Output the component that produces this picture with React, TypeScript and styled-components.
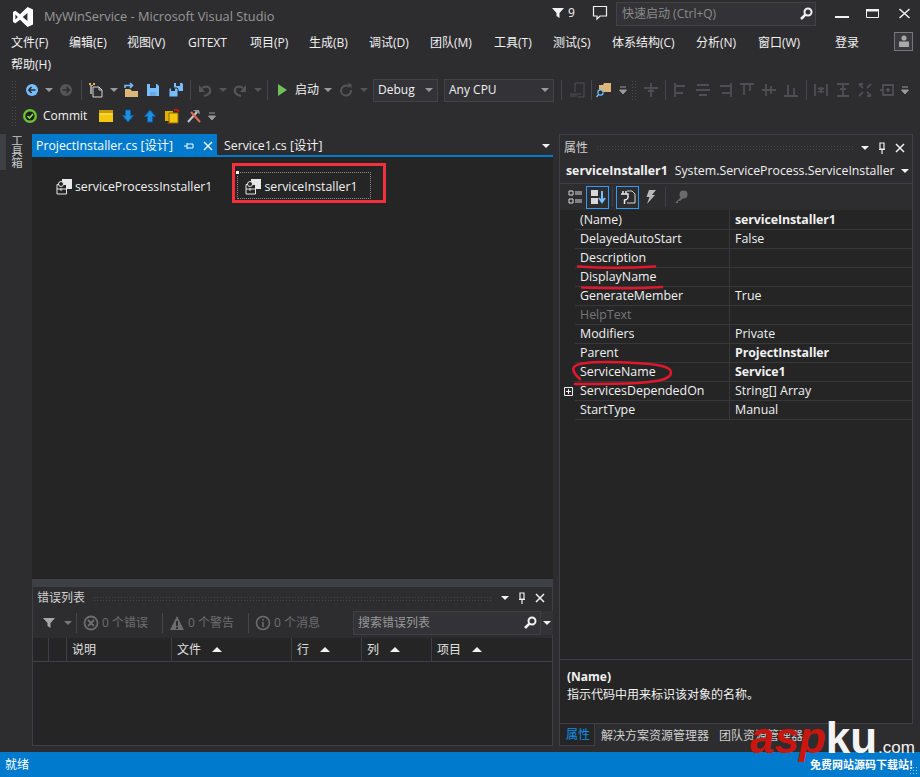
import React from 'react'
import styled, { createGlobalStyle } from 'styled-components'

const GlobalStyle = createGlobalStyle`
  html, body {
    margin: 0;
    padding: 0;
    background: #2d2d30;
  }
  * {
    box-sizing: border-box;
  }
`

const Root = styled.div`
  position: relative;
  width: 920px;
  height: 777px;
  overflow: hidden;
  display: flex;
  flex-direction: column;
  background: #2d2d30;
  color: #f1f1f1;
  font-family: 'Open Sans', 'Noto Sans CJK SC', sans-serif;
  font-size: 12px;
  line-height: 16px;
`

const TitleBar = styled.div`
  height: 30px;
  flex: none;
  display: flex;
  align-items: center;
  padding: 3px 0 0 12px;
`

const AppTitle = styled.div`
  margin: -2px 0 0 10px;
  width: 508px;
  flex: none;
  color: #999;
  font-size: 12.8px;
`

const Notify = styled.div`
  display: flex;
  align-items: center;
  gap: 4px;
  width: 40px;
  flex: none;
  margin-top: -7px;
`

const Bubble = styled.div`
  flex: none;
  margin-top: -7px;
`

const QuickLaunch = styled.div`
  margin: -5px 0 0 8px;
  width: 200px;
  height: 24px;
  flex: none;
  padding: 0 2px 0 5px;
  display: flex;
  align-items: center;
  justify-content: space-between;
  background: #333337;
  border: 1px solid #434346;
  color: #8a8a8a;
`

const WindowButtons = styled.div`
  margin: -7px 0 0 19px;
  display: flex;
  gap: 17px;
`

const MenuRow = styled.div`
  height: 22px;
  flex: none;
  display: flex;
  align-items: center;
  padding: 3px 0 0 11px;
`

const MenuItem = styled.span<{ $w?: number }>`
  width: ${(p) => (p.$w ? `${p.$w}px` : 'auto')};
  flex: none;
  white-space: nowrap;
`

const Avatar = styled.div`
  width: 19px;
  height: 19px;
  margin: -3px 0 0 35px;
  border: 1px solid #77777b;
  background: #3a3a3e;
  display: flex;
  align-items: center;
  justify-content: center;
`

const Toolbar = styled.div<{ $top: number }>`
  height: 24px;
  flex: none;
  margin-top: ${(p) => p.$top}px;
  display: flex;
  align-items: center;
  padding-left: 11px;
`

const Grip = styled.span`
  width: 6px;
  height: 20px;
  flex: none;
  background-image: radial-gradient(#4c4c50 0.7px, transparent 0.8px);
  background-size: 3px 3px;
`

const Tool = styled.span<{ $w: number }>`
  width: ${(p) => p.$w}px;
  height: 22px;
  flex: none;
  display: flex;
  align-items: center;
  justify-content: center;
`

const ToolSep = styled.span`
  width: 1px;
  height: 20px;
  flex: none;
  background: #47474b;
`

const ToolText = styled.span`
  flex: none;
  white-space: nowrap;
`

const Combo = styled.div<{ $w: number; $left: number }>`
  width: ${(p) => p.$w}px;
  margin-left: ${(p) => p.$left}px;
  height: 23px;
  flex: none;
  padding: 0 4px;
  display: flex;
  align-items: center;
  justify-content: space-between;
  background: #333337;
  border: 1px solid #434346;
`

const Arrow = styled.i<{ $color?: string }>`
  width: 0;
  height: 0;
  flex: none;
  border-left: 4px solid transparent;
  border-right: 4px solid transparent;
  border-top: 4px solid ${(p) => p.$color ?? '#999'};
`

const UpArrow = styled.i`
  width: 0;
  height: 0;
  flex: none;
  margin-left: 11px;
  border-left: 5px solid transparent;
  border-right: 5px solid transparent;
  border-bottom: 5px solid #f1f1f1;
`

const Workspace = styled.div`
  margin-top: 6px;
  height: 612px;
  flex: none;
  display: flex;
`

const SideStrip = styled.div`
  width: 32px;
  flex: none;
  display: flex;
`

const SideMark = styled.div`
  width: 6px;
  height: 36px;
  background: #3f3f46;
`

const SideText = styled.div`
  writing-mode: vertical-lr;
  margin: 1px 0 0 3px;
  height: 36px;
  width: 16px;
  font-size: 11.5px;
  line-height: 14px;
  color: #c7c7c7;
  letter-spacing: -0.5px;
`

const DocColumn = styled.div`
  width: 521px;
  flex: none;
  display: flex;
  flex-direction: column;
`

const TabStrip = styled.div`
  height: 23px;
  flex: none;
  display: flex;
  align-items: flex-start;
  border-bottom: 2px solid #007acc;
`

const ActiveTab = styled.div`
  width: 185px;
  height: 21px;
  flex: none;
  padding: 2px 4px 0;
  display: flex;
  align-items: center;
  background: #007acc;
  color: #fff;
`

const TabLabel = styled.span`
  flex: 1;
  white-space: nowrap;
  font-size: 12.3px;
`

const TabButtons = styled.span`
  display: flex;
  align-items: center;
  gap: 9px;
`

const Tab = styled.div`
  flex: 1;
  height: 21px;
  padding: 2px 3px 0 7px;
  display: flex;
  align-items: center;
  justify-content: space-between;
`

const Surface = styled.div`
  height: 422px;
  flex: none;
  padding: 15px 0 0 24px;
  display: flex;
  align-items: flex-start;
  background: #252526;
`

const Component = styled.div`
  display: flex;
  align-items: center;
  gap: 2px;
  height: 27px;
  font-size: 12.3px;
  white-space: nowrap;
  padding-top: 2px;
`

const Selected = styled(Component)`
  position: relative;
  margin-left: 25px;
  padding: 2px 0 0 7px;
  width: 134px;
  border: 1px dotted #8d8d8d;
`

const Handle = styled.i`
  position: absolute;
  left: -3px;
  top: -3px;
  width: 5px;
  height: 5px;
  background: #fff;
  border: 1px solid #222;
`

const Splitter = styled.div`
  height: 8px;
  flex: none;
  background: #3f3f46;
`

const ErrorPanel = styled.div`
  flex: 1;
  display: flex;
  flex-direction: column;
  background: #252526;
  border: 1px solid #3f3f46;
  border-top: 0;
`

const PanelTitle = styled.div<{ $h: number }>`
  height: ${(p) => p.$h}px;
  flex: none;
  padding: 1px 7px 0 4px;
  display: flex;
  align-items: center;
  gap: 8px;
  background: #2d2d30;
  color: #d0d0d0;
`

const TitleDots = styled.span`
  flex: 1;
  height: 5px;
  background-image: radial-gradient(#46464a 0.6px, transparent 0.7px);
  background-size: 3px 3px;
`

const PanelButtons = styled.span`
  display: flex;
  align-items: center;
  gap: 8px;
`

const ErrorBar = styled.div`
  height: 30px;
  flex: none;
  display: flex;
  align-items: center;
  padding-left: 6px;
  background: #2d2d30;
`

const Counter = styled.span`
  width: 85px;
  flex: none;
  padding-left: 6px;
  display: flex;
  align-items: center;
  gap: 3px;
  color: #6d6d70;
  white-space: nowrap;
`

const SearchBox = styled.div`
  margin-left: 19px;
  width: 188px;
  height: 24px;
  flex: none;
  padding: 0 3px 0 4px;
  display: flex;
  align-items: center;
  justify-content: space-between;
  background: #333337;
  border: 1px solid #3f3f46;
  color: #999;
`

const SearchDrop = styled.span`
  width: 12px;
  height: 24px;
  flex: none;
  display: flex;
  align-items: center;
  justify-content: center;
  background: #333337;
`

const ColumnHead = styled.div`
  height: 24px;
  flex: none;
  display: flex;
  border-bottom: 1px solid #3f3f46;
`

const HeadCell = styled.div<{ $w: number }>`
  width: ${(p) => p.$w}px;
  flex: none;
  padding-left: 5px;
  display: flex;
  align-items: center;
  color: #e0e0e0;
  border-right: 1px solid #3f3f46;
  &:last-child {
    border-right: 0;
  }
`

const PropsPanel = styled.div`
  margin-left: 6px;
  width: 354px;
  flex: none;
  display: flex;
  flex-direction: column;
`

const PropsBody = styled.div`
  flex: 1;
  display: flex;
  flex-direction: column;
  border: 1px solid #3f3f46;
  background: #252526;
`

const ObjectRow = styled.div`
  height: 25px;
  flex: none;
  padding: 0 3px 0 6px;
  display: flex;
  align-items: center;
  justify-content: space-between;
  background: #2d2d30;
  border-bottom: 1px solid #3f3f46;
  white-space: nowrap;
  font-size: 12.3px;
`

const ObjectName = styled.b`
  font-weight: 700;
  margin-right: 7px;
`

const PropsBar = styled.div`
  height: 26px;
  flex: none;
  padding-left: 3px;
  display: flex;
  align-items: center;
  background: #2d2d30;
`

const BarButton = styled.span<{ $on?: boolean }>`
  width: 23px;
  height: 23px;
  flex: none;
  display: flex;
  align-items: center;
  justify-content: center;
  border: 1px solid ${(p) => (p.$on ? '#3399ff' : 'transparent')};
`

const BarSep = styled.span`
  width: 1px;
  height: 20px;
  margin: 0 3px;
  flex: none;
  background: #3f3f46;
`

const PropGrid = styled.div`
  flex: 1;
`

const PropRow = styled.div`
  height: 19px;
  display: grid;
  grid-template-columns: 15px 155px 1fr;
  font-size: 12.4px;
  line-height: 19px;
`

const Gutter = styled.div`
  display: flex;
  align-items: center;
  justify-content: center;
  padding-left: 1px;
`

const PropName = styled.div<{ $dim?: boolean }>`
  padding-left: 5px;
  color: ${(p) => (p.$dim ? '#777' : '#f1f1f1')};
  white-space: nowrap;
  border-bottom: 1px solid #38383c;
  border-right: 1px solid #38383c;
`

const PropValue = styled.div<{ $bold?: boolean }>`
  padding-left: 5px;
  font-weight: ${(p) => (p.$bold ? 700 : 400)};
  letter-spacing: ${(p) => (p.$bold ? '-0.1px' : '0')};
  border-bottom: 1px solid #38383c;
`

const Description = styled.div`
  height: 64px;
  flex: none;
  padding: 8px 7px 0;
  border-top: 1px solid #3f3f46;
  line-height: 18px;
  white-space: nowrap;
`

const DescTitle = styled.div`
  font-weight: 700;
`

const BottomTabs = styled.div`
  height: 22px;
  flex: none;
  display: flex;
`

const BottomTab = styled.div<{ $on?: boolean }>`
  height: 22px;
  flex: none;
  padding: 1px 4px 0 6px;
  display: flex;
  align-items: center;
  color: ${(p) => (p.$on ? '#0e8fe8' : '#d0d0d0')};
  background: ${(p) => (p.$on ? '#252526' : 'transparent')};
  border: ${(p) => (p.$on ? '1px solid #3f3f46' : '0')};
  border-top: 0;
`

const StatusBar = styled.div`
  margin-top: 6px;
  height: 25px;
  flex: none;
  padding: 0 2px 0 5px;
  display: flex;
  align-items: center;
  justify-content: space-between;
  background: #007acc;
  color: #fff;
`

const ResizeGrip = styled.span`
  width: 9px;
  height: 9px;
  margin-top: 12px;
  background-image: radial-gradient(#9fd0ef 0.7px, transparent 0.8px);
  background-size: 3px 3px;
`

const Annotations = styled.svg`
  position: absolute;
  inset: 0;
  pointer-events: none;
`

const Watermark = styled.div`
  position: absolute;
  left: 750px;
  top: 713px;
  width: 170px;
  height: 64px;
  font-family: 'Liberation Sans', Arial, sans-serif;
`

const MarkWord = styled.div`
  position: absolute;
  left: 0;
  top: 0;
  font-size: 44px;
  line-height: 50px;
  font-weight: 700;
  font-style: italic;
  white-space: nowrap;
  color: #c9170f;
`

const MarkWhite = styled.span`
  color: #f4f4f4;
  font-style: normal;
`

const MarkCom = styled.span`
  position: absolute;
  left: 128px;
  top: 24px;
  font-size: 17px;
  line-height: 22px;
  color: #f4f4f4;
`

const MarkSlogan = styled.div`
  position: absolute;
  left: 60px;
  top: 44px;
  font-family: 'Noto Sans CJK SC', sans-serif;
  font-size: 11px;
  line-height: 14px;
  font-weight: 700;
  color: #fff;
  white-space: nowrap;
`

const Icon = ({ w = 16, h = 16, children }: { w?: number; h?: number; children: React.ReactNode }) => (
  <svg width={w} height={h} viewBox={`0 0 ${w} ${h}`} style={{ display: 'block', flex: 'none' }}>
    {children}
  </svg>
)

const VsLogo = () => (
  <Icon w={22} h={22}>
    <path d="M15.6 1 L21 3.4 V18.6 L15.6 21 L8 13.8 L3.4 17.2 L1 16 V6 L3.4 4.8 L8 8.2 Z M15.4 7 L10.8 11 L15.4 15 Z M3.4 8.6 V13.4 L5.8 11 Z" fill="#fff" fillRule="evenodd" />
  </Icon>
)

const Search = () => (
  <Icon w={14} h={14}>
    <circle cx="9" cy="5" r="3.5" fill="none" stroke="#f1f1f1" strokeWidth="2" />
    <path d="M6.4 7.6 L2 12" stroke="#f1f1f1" strokeWidth="2.6" />
  </Icon>
)

const Pin = ({ color = '#f1f1f1' }: { color?: string }) => (
  <Icon w={10} h={12}>
    <path d="M3 1 H7 V7 H3 Z M2 7.5 H8 M5 8 V12" fill="none" stroke={color} strokeWidth="1.2" />
  </Icon>
)

const Close = () => (
  <Icon w={10} h={10}>
    <path d="M1 1 L9 9 M9 1 L1 9" stroke="#f1f1f1" strokeWidth="1.5" />
  </Icon>
)

const Circle = ({ fill, glyph }: { fill: string; glyph: string }) => (
  <Icon>
    <circle cx="8" cy="8" r="6" fill={fill} />
    <path d="M11.5 8 H5 M7.5 5 L4.8 8 L7.5 11" fill="none" stroke={glyph} strokeWidth="1.6" transform={fill === '#555' ? 'rotate(180 8 8)' : undefined} />
  </Icon>
)

const NewProject = () => (
  <Icon>
    <path d="M5 5 H11 L14 8 V15 H5 Z M11 5 V8 H14" fill="none" stroke="#d8d8d8" />
    <path d="M2 3 H4 V12 H2 Z" fill="#999" />
    <path d="M1 1 h2 v2 h-2 Z M5 1 h2 v2 h-2 Z M3 3 h2 v1 h-2 Z" fill="#e8b060" />
  </Icon>
)

const OpenFile = () => (
  <Icon>
    <path d="M2 7 H7 L9 9 H15 V15 H2 Z" fill="#dcb67a" />
    <path d="M2 6 V3.5 H9 M7 1 L9.5 3.5 L7 6" fill="none" stroke="#75beff" strokeWidth="1.6" />
  </Icon>
)

const Save = () => (
  <Icon>
    <path d="M2 2 H12 L14 4 V14 H2 Z" fill="#75beff" />
    <path d="M5 2 H11 V6 H5 Z" fill="#2d2d30" />
    <path d="M5 10 H11 V14 H5 Z" fill="#2d2d30" opacity="0.15" />
  </Icon>
)

const SaveAll = () => (
  <Icon>
    <path d="M6 1 H14 L15 2 V9 H6 Z" fill="#75beff" />
    <path d="M8 1 H12 V4 H8 Z" fill="#2d2d30" />
    <path d="M1 6 H9 L10 7 V15 H1 Z" fill="#75beff" stroke="#2d2d30" />
    <path d="M3 6 H7 V9 H3 Z" fill="#2d2d30" />
  </Icon>
)

const Undo = ({ flip }: { flip?: boolean }) => (
  <Icon>
    <g transform={flip ? 'matrix(-1 0 0 1 16 0)' : undefined}>
      <path d="M7 14 C12 13 14 10 13 7 C12 4 8 4 5 6" fill="none" stroke="#555" strokeWidth="2.2" />
      <path d="M2 3 V10 H8 Z" fill="#555" />
    </g>
  </Icon>
)

const Play = () => (
  <Icon w={12} h={14}>
    <path d="M2 1 L11 7 L2 13 Z" fill="#6fbf5a" />
  </Icon>
)

const Refresh = () => (
  <Icon>
    <path d="M11.5 5 A5 5 0 1 0 13 8" fill="none" stroke="#555" strokeWidth="2" />
    <path d="M9 1 L13.5 2 V6.5 Z" fill="#555" />
  </Icon>
)

const Attach = () => (
  <Icon>
    <path d="M6 1 H15 V15 H9 M6 1 V10" fill="none" stroke="#505054" />
    <path d="M1 12 H12 M1 14 H8" stroke="#505054" />
  </Icon>
)

const FindFolder = () => (
  <Icon w={16} h={16}>
    <path d="M3 3 H7 L8 1 H15 V10 H3 Z" fill="#dcb67a" />
    <circle cx="4.5" cy="10.5" r="2.6" fill="#2d2d30" stroke="#75beff" strokeWidth="1.2" />
    <path d="M2.6 12.5 L0.5 15" stroke="#75beff" strokeWidth="1.4" />
  </Icon>
)

const Layout = ({ d }: { d: string }) => (
  <Icon>
    <path d={d} fill="none" stroke="#4f4f53" strokeWidth="1.8" />
  </Icon>
)

const centerIcon = 'M1 6 H15 M8 1 V15 M5 9 H11'

const alignIcons = [
  'M2 1 V15 M3 4 H12 M3 11 H10',
  'M2 3 H14 M1 8 H15 M4 13 H12',
  'M14 1 V15 M3 4 H13 M5 11 H13',
  'M1 2 H15 M5 3 V13 M11 3 V9',
  'M1 8 H15 M5 2 V14 M10 4 V12',
  'M1 14 H15 M5 3 V13 M11 6 V13',
]

const spacingIcons = [
  'M2 2 V14 M14 2 V14 M8 5 V11 M5 6 L11 10 M11 6 L5 10',
  'M2 2 H14 M2 14 H14 M8 3 V13 M5 7 H11',
  'M2 2 L6 6 M14 2 L10 6 M2 14 L6 10 M14 14 L10 10 M2 2 H6 M10 14 H14',
  'M4 3 H14 V13 H4 Z M9 6 V10 M7 8 H11 M1 8 H4',
]

const ComponentGlyph = () => (
  <Icon w={17} h={17}>
    <path d="M6 1 H16 V11 H6 Z" fill="#e8e8e8" />
    <path d="M1 6.5 H10.5 V16 H1 Z" fill="#252526" stroke="#e8e8e8" />
    <circle cx="5" cy="6" r="2.5" fill="#252526" stroke="#e8e8e8" />
    <path d="M1 11 H10 M5 10 V13" stroke="#e8e8e8" />
  </Icon>
)

const Funnel = ({ color }: { color: string }) => (
  <Icon w={12} h={12}>
    <path d="M0 1 H12 L7.5 6 V11 L4.5 9 V6 Z" fill={color} />
  </Icon>
)

const ToolMoreArrow = () => (
  <Icon w={8} h={10}>
    <path d="M1 2 H7 M0.5 5 H7.5 L4 9 Z" stroke="#999" fill="#999" />
  </Icon>
)

const Counters = [
  { id: 'err', label: '0 个错误', icon: <path d="M8 1.5 A6.5 6.5 0 1 0 8 14.5 A6.5 6.5 0 1 0 8 1.5 M5 5 L11 11 M11 5 L5 11" fill="none" stroke="#6d6d70" strokeWidth="1.8" /> },
  { id: 'warn', label: '0 个警告', icon: <path d="M8 1 L15 15 H1 Z M7 6 V11 H9 V6 Z M7 12 V14 H9 V12 Z" fill="#6d6d70" fillRule="evenodd" /> },
  { id: 'info', label: '0 个消息', icon: <path d="M8 1.5 A6.5 6.5 0 1 0 8 14.5 A6.5 6.5 0 1 0 8 1.5 M8 4 V5.8 M8 7 V12" fill="none" stroke="#6d6d70" strokeWidth="1.5" /> },
]

const headCells = [
  { w: 16, label: '' },
  { w: 18, label: '' },
  { w: 105, label: '说明' },
  { w: 120, label: '文件', sort: true },
  { w: 70, label: '行', sort: true },
  { w: 70, label: '列', sort: true },
  { w: 120, label: '项目', sort: true },
]

const props = [
  { name: '(Name)', value: 'serviceInstaller1', bold: true },
  { name: 'DelayedAutoStart', value: 'False' },
  { name: 'Description', value: '' },
  { name: 'DisplayName', value: '' },
  { name: 'GenerateMember', value: 'True' },
  { name: 'HelpText', value: '', dim: true },
  { name: 'Modifiers', value: 'Private' },
  { name: 'Parent', value: 'ProjectInstaller', bold: true },
  { name: 'ServiceName', value: 'Service1', bold: true },
  { name: 'ServicesDependedOn', value: 'String[] Array', expand: true },
  { name: 'StartType', value: 'Manual' },
]

const menus = [
  { label: '文件(F)', w: 58 },
  { label: '编辑(E)', w: 58 },
  { label: '视图(V)', w: 61 },
  { label: 'GITEXT', w: 62 },
  { label: '项目(P)', w: 59 },
  { label: '生成(B)', w: 60 },
  { label: '调试(D)', w: 61 },
  { label: '团队(M)', w: 64 },
  { label: '工具(T)', w: 59 },
  { label: '测试(S)', w: 59 },
  { label: '体系结构(C)', w: 84 },
  { label: '分析(N)', w: 62 },
  { label: '窗口(W)', w: 77 },
  { label: '登录', w: 24 },
]

const App = () => (
  <Root>
    <GlobalStyle />
    <TitleBar>
      <VsLogo />
      <AppTitle>MyWinService - Microsoft Visual Studio</AppTitle>
      <Notify>
        <Funnel color="#f1f1f1" />9
      </Notify>
      <Bubble>
        <Icon>
          <path d="M1.5 1.5 H14.5 V11 H8 L5 14 V11 H1.5 Z" fill="none" stroke="#f1f1f1" strokeWidth="1.2" />
        </Icon>
      </Bubble>
      <QuickLaunch>
        快速启动 (Ctrl+Q)
        <Search />
      </QuickLaunch>
      <WindowButtons>
        <Icon w={14} h={14}>
          <path d="M0 10 H14 V12 H0 Z" fill="#f1f1f1" />
        </Icon>
        <Icon w={14} h={14}>
          <path d="M0.5 3.5 H12.5 V11.5 H0.5 Z" fill="none" stroke="#f1f1f1" />
          <path d="M0 3 H13 V5.5 H0 Z" fill="#f1f1f1" />
        </Icon>
        <Icon w={14} h={14}>
          <path d="M2.5 3 L12.5 12 M12.5 3 L2.5 12" stroke="#f1f1f1" strokeWidth="1.5" />
        </Icon>
      </WindowButtons>
    </TitleBar>

    <MenuRow>
      {menus.map((m) => (
        <MenuItem key={m.label} $w={m.w}>
          {m.label}
        </MenuItem>
      ))}
      <Avatar>
        <Icon w={14} h={14}>
          <circle cx="7" cy="4" r="2.6" fill="#a8a8a8" />
          <path d="M2 7.5 H12 V13 H2 Z" fill="#a8a8a8" />
        </Icon>
      </Avatar>
    </MenuRow>
    <MenuRow>
      <MenuItem>帮助(H)</MenuItem>
    </MenuRow>

    <Toolbar $top={4}>
      <Grip />
      <Tool $w={30}><Circle fill="#75beff" glyph="#2d2d30" /></Tool>
      <Tool $w={4}><Arrow /></Tool>
      <Tool $w={30}><Circle fill="#555" glyph="#2d2d30" /></Tool>
      <ToolSep />
      <Tool $w={28}><NewProject /></Tool>
      <Tool $w={8}><Arrow /></Tool>
      <Tool $w={26}><OpenFile /></Tool>
      <Tool $w={18}><Save /></Tool>
      <Tool $w={28}><SaveAll /></Tool>
      <ToolSep />
      <Tool $w={28}><Undo /></Tool>
      <Tool $w={8}><Arrow $color="#555" /></Tool>
      <Tool $w={26}><Undo flip /></Tool>
      <Tool $w={10}><Arrow $color="#555" /></Tool>
      <Tool $w={4} />
      <ToolSep />
      <Tool $w={27}><Play /></Tool>
      <ToolText>启动</ToolText>
      <Tool $w={18}><Arrow /></Tool>
      <Tool $w={18}><Refresh /></Tool>
      <Tool $w={17}><Arrow $color="#555" /></Tool>
      <Combo $w={65} $left={1}>
        Debug
        <Arrow />
      </Combo>
      <Combo $w={110} $left={6}>
        Any CPU
        <Arrow />
      </Combo>
      <Tool $w={7} />
      <ToolSep />
      <Tool $w={29}><Attach /></Tool>
      <ToolSep />
      <Tool $w={24}><FindFolder /></Tool>
      <Tool $w={14}><ToolMoreArrow /></Tool>
      <Tool $w={1} />
      <Grip />
      <Tool $w={28}><Layout d={centerIcon} /></Tool>
      <ToolSep />
      <Tool $w={4} />
      {alignIcons.map((d) => (
        <Tool key={d} $w={22}><Layout d={d} /></Tool>
      ))}
      <Tool $w={4} />
      <ToolSep />
      <Tool $w={3} />
      {spacingIcons.map((d) => (
        <Tool key={d} $w={22}><Layout d={d} /></Tool>
      ))}
      <Tool $w={14}><ToolMoreArrow /></Tool>
    </Toolbar>

    <Toolbar $top={2}>
      <Grip />
      <Tool $w={26}>
        <Icon>
          <circle cx="8" cy="8" r="7" fill="#6bc136" />
          <circle cx="8" cy="8" r="4.6" fill="#1c1c1c" />
          <path d="M5.5 8 L7.5 10 L11 6" fill="none" stroke="#8fe04f" strokeWidth="1.6" />
        </Icon>
      </Tool>
      <ToolText>Commit</ToolText>
      <Tool $w={8} />
      <Tool $w={22}>
        <Icon w={14} h={12}>
          <path d="M0 0 H14 V12 H0 Z" fill="#f2c811" />
          <path d="M0 0 H14 V3 H0 Z" fill="#c79b05" />
          <path d="M1 4 H13" stroke="#fbe66a" />
        </Icon>
      </Tool>
      <Tool $w={22}>
        <Icon w={12} h={14}>
          <path d="M3.5 1 H8.5 V6.5 H11.5 L6 13 L0.5 6.5 H3.5 Z" fill="#1b8fe0" stroke="#0b5fa5" />
        </Icon>
      </Tool>
      <Tool $w={22}>
        <Icon w={12} h={14}>
          <path d="M3.5 13 H8.5 V7.5 H11.5 L6 1 L0.5 7.5 H3.5 Z" fill="#1b8fe0" stroke="#0b5fa5" />
        </Icon>
      </Tool>
      <Tool $w={22}>
        <Icon>
          <path d="M1 3 H9 V13 H1 Z" fill="#e2b100" />
          <path d="M5 5 H14 V15 H5 Z" fill="#f2c811" stroke="#8a6d00" />
          <path d="M10 2 A4 4 0 0 1 15 4 M4 15 A3 3 0 0 0 8 16" fill="none" stroke="#e51400" strokeWidth="1.6" />
        </Icon>
      </Tool>
      <Tool $w={22}>
        <Icon>
          <path d="M2 14 L11 4" stroke="#c8c8c8" strokeWidth="2" />
          <path d="M7 2 H13 L14 6 L10 4 Z" fill="#9a9a9a" />
          <path d="M14 14 L5 4" stroke="#e06a5a" strokeWidth="2" />
        </Icon>
      </Tool>
      <Tool $w={14}><ToolMoreArrow /></Tool>
    </Toolbar>

    <Workspace>
      <SideStrip>
        <SideMark />
        <SideText>工具箱</SideText>
      </SideStrip>

      <DocColumn>
        <TabStrip>
          <ActiveTab>
            <TabLabel>ProjectInstaller.cs [设计]</TabLabel>
            <TabButtons>
              <Icon w={10} h={10}>
                <path d="M0 5 H3 M3 2 V8 M3 3 H9 V7 H3" fill="none" stroke="#fff" />
              </Icon>
              <Close />
            </TabButtons>
          </ActiveTab>
          <Tab>
            <TabLabel>Service1.cs [设计]</TabLabel>
            <Arrow $color="#f1f1f1" />
          </Tab>
        </TabStrip>
        <Surface>
          <Component>
            <ComponentGlyph />
            serviceProcessInstaller1
          </Component>
          <Selected>
            <Handle />
            <ComponentGlyph />
            serviceInstaller1
          </Selected>
        </Surface>
        <Splitter />
        <ErrorPanel>
          <PanelTitle $h={21}>
            错误列表
            <TitleDots />
            <PanelButtons>
              <Arrow $color="#f1f1f1" />
              <Pin />
              <Close />
            </PanelButtons>
          </PanelTitle>
          <ErrorBar>
            <Tool $w={20}><Funnel color="#a8a8a8" /></Tool>
            <Tool $w={17}><Arrow $color="#777" /></Tool>
            <ToolSep />
            {Counters.map((c, i) => (
              <React.Fragment key={c.id}>
                <Counter>
                  <Icon>{c.icon}</Icon>
                  {c.label}
                </Counter>
                {i < 2 && <ToolSep />}
              </React.Fragment>
            ))}
            <SearchBox>
              搜索错误列表
              <Search />
            </SearchBox>
            <SearchDrop><Arrow $color="#f1f1f1" /></SearchDrop>
          </ErrorBar>
          <ColumnHead>
            {headCells.map((c, i) => (
              <HeadCell key={i} $w={c.w}>
                {c.label}
                {c.sort && <UpArrow />}
              </HeadCell>
            ))}
          </ColumnHead>
        </ErrorPanel>
      </DocColumn>

      <PropsPanel>
        <PropsBody>
          <PanelTitle $h={24}>
            属性
            <TitleDots />
            <PanelButtons>
              <Arrow $color="#f1f1f1" />
              <Pin />
              <Close />
            </PanelButtons>
          </PanelTitle>
          <ObjectRow>
            <span>
              <ObjectName>serviceInstaller1</ObjectName>
              System.ServiceProcess.ServiceInstaller
            </span>
            <Arrow $color="#f1f1f1" />
          </ObjectRow>
          <PropsBar>
            <BarButton>
              <Icon>
                <path d="M2 2 H6 V6 H2 Z M2 10 H6 V14 H2 Z M8 3 H15 M8 5 H15 M8 11 H15 M8 13 H15" fill="none" stroke="#d8d8d8" />
              </Icon>
            </BarButton>
            <BarButton $on>
              <Icon>
                <path d="M1 1 H8 V7 H1 Z M1 9 H8 V15 H1 Z" fill="#d8d8d8" />
                <path d="M12 2 V12 M9 9 L12 13 L15 9" fill="none" stroke="#75beff" strokeWidth="2" />
              </Icon>
            </BarButton>
            <BarSep />
            <BarButton $on>
              <Icon>
                <path d="M7 2 H12 L15 5 V14 H7" fill="none" stroke="#d8d8d8" />
                <path d="M1 5 H8 V8 C8 10 6 11 4.5 11 V15 M3 2 V5 M6 2 V5" fill="none" stroke="#e8e8e8" strokeWidth="1.5" />
              </Icon>
            </BarButton>
            <BarButton>
              <Icon>
                <path d="M6 1 H13 L9 6 H12 L4 15 L6.5 8 H3.5 Z" fill="#b8b8b8" />
              </Icon>
            </BarButton>
            <BarSep />
            <BarButton>
              <Icon>
                <circle cx="10.5" cy="5.5" r="4" fill="#6a6a6a" />
                <path d="M8 8 L2 14 H5 V12 H7 L10 9 Z" fill="#6a6a6a" />
              </Icon>
            </BarButton>
          </PropsBar>
          <PropGrid>
            {props.map((p) => (
              <PropRow key={p.name}>
                <Gutter>
                  {p.expand && (
                    <Icon w={9} h={9}>
                      <path d="M0.5 0.5 H8.5 V8.5 H0.5 Z M2 4.5 H7 M4.5 2 V7" fill="none" stroke="#f1f1f1" />
                    </Icon>
                  )}
                </Gutter>
                <PropName $dim={p.dim}>{p.name}</PropName>
                <PropValue $bold={p.bold}>{p.value}</PropValue>
              </PropRow>
            ))}
          </PropGrid>
          <Description>
            <DescTitle>(Name)</DescTitle>
            指示代码中用来标识该对象的名称。
          </Description>
        </PropsBody>
        <BottomTabs>
          <BottomTab $on>属性</BottomTab>
          <BottomTab>解决方案资源管理器</BottomTab>
          <BottomTab>团队资源管理器</BottomTab>
        </BottomTabs>
      </PropsPanel>
    </Workspace>

    <StatusBar>
      就绪
      <ResizeGrip />
    </StatusBar>

    <Annotations width={920} height={777} viewBox="0 0 920 777">
      <rect x="233.5" y="164.5" width="151" height="37" fill="none" stroke="#f5303a" strokeWidth="3" />
      <g fill="none" stroke="#e0182d" strokeWidth="2.6" strokeLinecap="round">
        <path d="M578 266.5 C600 268 630 268 655 266.5" />
        <path d="M582 287.5 C610 288.5 640 288.5 662 287" />
        <path d="M580 379 C575 375 572 370 574 367 C578 362 600 361 635 363 C655 364 672 366 671 373 C670 381 650 382 638 383 C620 384 590 384 575 384" />
      </g>
    </Annotations>

    <Watermark>
      <MarkWord>
        asp<MarkWhite>ku</MarkWhite>
      </MarkWord>
      <MarkCom>.com</MarkCom>
      <MarkSlogan>免费网站源码下载站!</MarkSlogan>
    </Watermark>
  </Root>
)

export default App
